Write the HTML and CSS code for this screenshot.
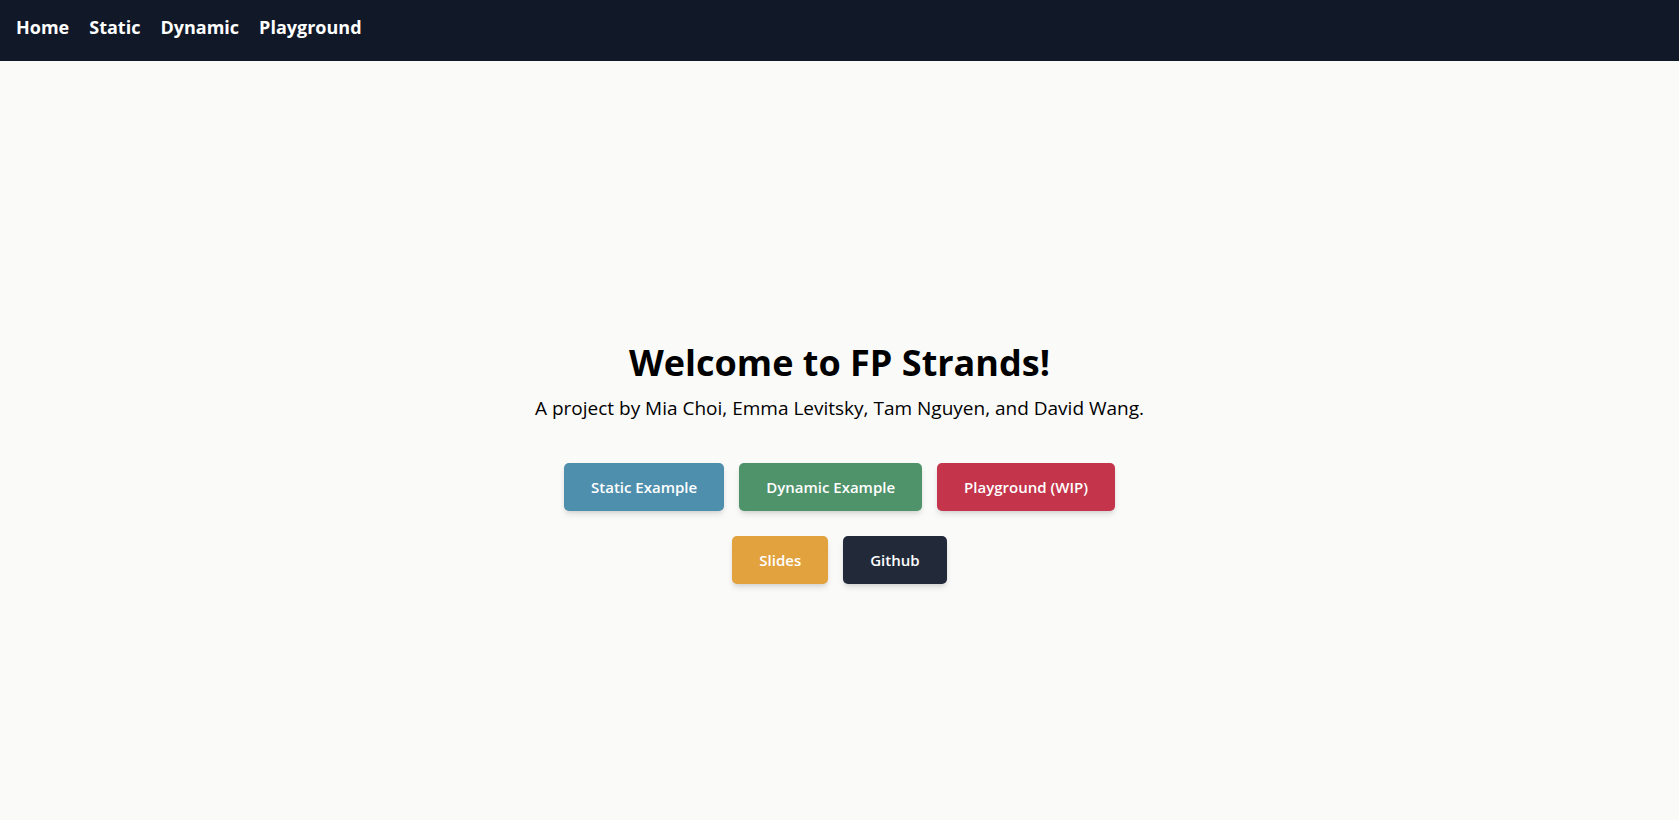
FILE: index.html
```html
<!DOCTYPE html>
<html>
<head>
<meta charset="utf-8">
<link rel="stylesheet" href="styles.css">
</head>
<body>
<nav class="nav">
  <a class="nav-link" href="#">Home</a>
  <a class="nav-link" href="#">Static</a>
  <a class="nav-link" href="#">Dynamic</a>
  <a class="nav-link" href="#">Playground</a>
</nav>
<main class="main">
  <h1 class="title">Welcome to FP Strands!</h1>
  <p class="subtitle">A project by Mia Choi, Emma Levitsky, Tam Nguyen, and David Wang.</p>
  <div class="buttons">
    <div class="row">
      <a class="btn btn-static" href="#">Static Example</a>
      <a class="btn btn-dynamic" href="#">Dynamic Example</a>
      <a class="btn btn-play" href="#">Playground (WIP)</a>
    </div>
    <div class="row">
      <a class="btn btn-slides" href="#">Slides</a>
      <a class="btn btn-github" href="#">Github</a>
    </div>
  </div>
</main>
</body>
</html>
```
FILE: styles.css
```css
* { box-sizing: border-box; }
html, body { margin: 0; padding: 0; }
body {
  background: #fafaf9;
  font-family: "Open Sans", "Noto Sans", sans-serif;
  color: #000;
  height: 820px;
  overflow: hidden;
}
.nav {
  background: #111827;
  height: 61px;
  display: flex;
  align-items: center;
  padding: 0 16px 8px;
  gap: 20px;
}
.nav-link {
  color: #fff;
  text-decoration: none;
  font-weight: 700;
  font-size: 18px;
}
.main {
  display: flex;
  flex-direction: column;
  align-items: center;
  padding-top: 282px;
}
.title {
  margin: 0;
  font-size: 36px;
  line-height: 40px;
  font-weight: 700;
}
.subtitle {
  margin: 11px 0 0;
  font-size: 19px;
  line-height: 28px;
}
.buttons {
  margin-top: 41px;
  display: flex;
  flex-direction: column;
  align-items: center;
  gap: 25px;
}
.row {
  display: flex;
  gap: 15px;
}
.btn {
  display: block;
  color: #fff;
  text-decoration: none;
  font-weight: 600;
  font-size: 15px;
  line-height: 24px;
  padding: 12px 27px;
  border-radius: 5px;
  box-shadow: 0 4px 6px -1px rgba(0,0,0,0.12), 0 2px 4px -2px rgba(0,0,0,0.1);
}
.btn-static { background: #4f8fae; }
.btn-dynamic { background: #4f936b; }
.btn-play { background: #c4344b; }
.btn-slides { background: #e2a23e; }
.btn-github { background: #222a3a; }
```
